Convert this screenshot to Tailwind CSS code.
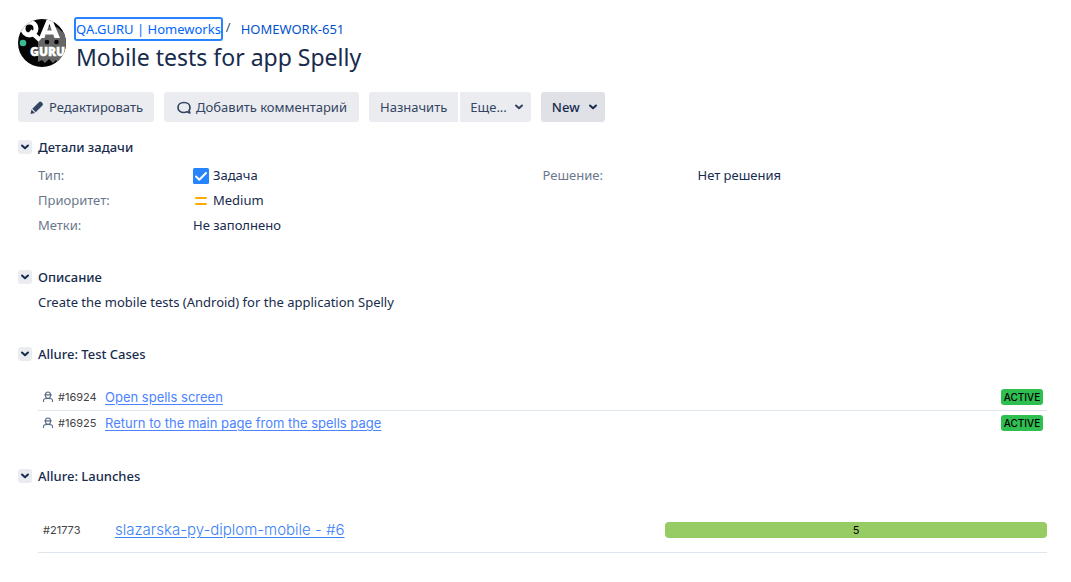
<!DOCTYPE html>
<html lang="ru">
<head>
<meta charset="utf-8">
<meta name="viewport" content="width=device-width, initial-scale=1">
<title>HOMEWORK-651 Mobile tests for app Spelly</title>
<script src="https://cdn.jsdelivr.net/npm/@tailwindcss/browser@4"></script>
</head>
<body class="bg-white font-['Noto_Sans',sans-serif] text-[13px] leading-5 text-[#172b4d]">
<svg class="hidden">
  <symbol id="chevron" viewBox="0 0 10 8"><path d="M2 2.500 5 5.300 8 2.500" fill="none" stroke="currentColor" stroke-width="2" stroke-linecap="round" stroke-linejoin="round"/></symbol>
  <symbol id="person" viewBox="0 0 12 12"><path d="M3.500 3.500a2.500 2.500 0 0 1 5 0v1.200a2.500 2.500 0 0 1-5 0zM2.300 3.900h7.400M1.500 11V9.500Q1.500 7.500 4 7.500h4q2.500 0 2.500 2V11M4.200 6.500v1.800M7.800 6.500v1.800" fill="none" stroke="currentColor" stroke-width="1.100"/></symbol>
</svg>

<header class="flex gap-[10px] px-[18px] pt-[19px]">
  <svg class="size-12 shrink-0" viewBox="0 0 48 48" role="img" aria-label="QA.GURU">
    <clipPath id="disc"><circle cx="24" cy="24" r="24"/></clipPath>
    <g clip-path="url(#disc)">
      <path d="M0 0h48v48H0z" fill="#050505"/>
      <path d="M20 20 28 16V9q6-4 12 0l8 7v30l-7-1-3-4-3 3-4-4-4 4-3-3-4 2z" fill="#666"/>
      <circle cx="5" cy="24" r="3.300" fill="#3cba92"/>
      <circle cx="29" cy="23" r="2.300" fill="#050505"/><circle cx="38.500" cy="23" r="2.300" fill="#050505"/>
      <circle cx="11.500" cy="9.500" r="6.500" fill="none" stroke="#fff" stroke-width="5"/>
      <path d="m12 12 10 9" stroke="#fff" stroke-width="4.500"/>
      <path d="M21 19 28.500 1h6L42 19h-5.500l-1.200-3.500h-7.600L26.500 19zM29.200 11.500h4.600L31.500 5z" fill="#fff" fill-rule="evenodd"/>
      <text x="12" y="37" font-size="12" fill="#fff" stroke="#fff" stroke-width=".4" font-family="Open Sans, sans-serif" font-weight="800">GURU</text>
    </g>
  </svg>
  <div class="-mt-[2px]">
    <nav class="flex items-center" aria-label="Навигация">
      <a href="#" class="-ml-[2px] rounded-[3px] border-2 border-[#2684ff] text-[#0065ff]">QA.GURU | Homeworks</a>
      <span class="ml-[3px] -mt-1 text-[#42526e]">/</span>
      <a href="#" class="ml-[10px] text-[#0052cc]">HOMEWORK-651</a>
    </nav>
    <h1 class="mt-[2px] text-[23px] font-[450] leading-7">Mobile tests for app Spelly</h1>
  </div>
</header>

<div class="mt-[21px] flex gap-[10px] px-[18px] text-[#344563]">
  <button class="flex h-[30px] items-center gap-1 rounded-[3px] bg-[#ebecf0] px-[11px]">
    <svg class="size-4" viewBox="0 0 16 16"><path d="m1.500 15 1-4.500 3.500 3.500zM3.300 9.800l6.800-6.800q1.200-1 2.300.1l1 1q1.100 1.100.1 2.300l-6.800 6.800z" fill="currentColor"/></svg>
    <span>Редактировать</span></button>
  <button class="flex h-[30px] items-center gap-1 rounded-[3px] bg-[#ebecf0] px-3">
    <svg class="size-4" viewBox="0 0 16 16"><path d="M11 12.800q-1.300.7-3 .7C4.500 13.500 2 11.300 2 8.500s2.500-5 6-5 6 2.200 6 5q0 1.800-1 3l.8 2.500z" fill="none" stroke="currentColor" stroke-width="1.700" stroke-linejoin="round"/></svg>
    <span>Добавить комментарий</span></button>
  <div class="flex gap-[2px]">
    <button class="h-[30px] rounded-l-[3px] bg-[#ebecf0] px-[11px]">Назначить</button>
    <button class="flex h-[30px] items-center gap-[7px] rounded-r-[3px] bg-[#ebecf0] pl-[10px] pr-[7px]">Еще...<svg class="h-2 w-[10px]"><use href="#chevron"/></svg></button>
  </div>
  <button class="flex h-[30px] items-center gap-2 rounded-[3px] bg-[#dfe1e6] pl-[11px] pr-[7px] font-medium text-[#172b4d]">New<svg class="h-2 w-[10px]"><use href="#chevron"/></svg></button>
</div>

<main class="px-[18px] pt-[15px]">
  <section>
    <div class="flex items-center gap-[6px]">
      <button aria-label="Детали задачи" class="grid size-[14px] place-items-center rounded-[3px] bg-[#ebecf0]"><svg class="h-2 w-[10px]"><use href="#chevron"/></svg></button>
      <h2 class="font-medium">Детали задачи</h2>
    </div>
    <div class="grid grid-cols-2 pl-5 pr-[6px] pt-[6px] leading-[25px]">
      <dl class="grid grid-cols-[155px_1fr]">
        <dt class="text-[#6b778c]">Тип:</dt>
        <dd class="flex items-center gap-1"><svg class="size-4" viewBox="0 0 16 16"><rect width="16" height="16" rx="1.500" fill="#2684ff"/><path d="m3 8.500 3.300 3.200L13 5" fill="none" stroke="#fff" stroke-width="2" stroke-linecap="round" stroke-linejoin="round"/></svg>Задача</dd>
        <dt class="text-[#6b778c]">Приоритет:</dt>
        <dd class="flex items-center gap-1"><svg class="size-4" viewBox="0 0 16 16"><path d="M3 5h10M3 11h10" stroke="#ffab00" stroke-width="2" stroke-linecap="round"/></svg>Medium</dd>
        <dt class="text-[#6b778c]">Метки:</dt>
        <dd>Не заполнено</dd>
      </dl>
      <dl class="grid grid-cols-[155px_1fr] content-start">
        <dt class="text-[#6b778c]">Решение:</dt>
        <dd>Нет решения</dd>
      </dl>
    </div>
  </section>

  <section class="mt-[29px]">
    <div class="flex items-center gap-[6px]">
      <button aria-label="Описание" class="grid size-[14px] place-items-center rounded-[3px] bg-[#ebecf0]"><svg class="h-2 w-[10px]"><use href="#chevron"/></svg></button>
      <h2 class="font-medium">Описание</h2>
    </div>
    <p class="mt-[5px] pl-5">Create the mobile tests (Android) for the application Spelly</p>
  </section>

  <section class="mt-8">
    <div class="flex items-center gap-[6px]">
      <button aria-label="Allure: Test Cases" class="grid size-[14px] place-items-center rounded-[3px] bg-[#ebecf0]"><svg class="h-2 w-[10px]"><use href="#chevron"/></svg></button>
      <h2 class="font-medium">Allure: Test Cases</h2>
    </div>
    <div class="mt-5 pl-5 pr-[6px]">
      <table class="w-full font-[Inter,sans-serif]">
        <tbody>
          <tr class="h-[26px] border-b border-[#dfe5ec]">
            <td class="w-[67px] p-0 pl-1 text-[11px] text-[#444]"><span class="flex items-center gap-1"><svg class="size-3 text-[#5b6b85]"><use href="#person"/></svg>#16924</span></td>
            <td class="p-0"><a href="#" class="text-[13px] text-[#4c84ff] underline underline-offset-2">Open spells screen</a></td>
            <td class="w-[50px] p-0 pr-1"><span class="ml-auto block h-4 w-[42px] rounded-[3px] bg-[#2fbe50] text-center text-[10px] font-medium leading-4 text-black">ACTIVE</span></td>
          </tr>
          <tr class="h-[26px]">
            <td class="p-0 pl-1 text-[11px] text-[#444]"><span class="flex items-center gap-1"><svg class="size-3 text-[#5b6b85]"><use href="#person"/></svg>#16925</span></td>
            <td class="p-0"><a href="#" class="text-[13px] text-[#4c84ff] underline underline-offset-2">Return to the main page from the spells page</a></td>
            <td class="p-0 pr-1"><span class="ml-auto block h-4 w-[42px] rounded-[3px] bg-[#2fbe50] text-center text-[10px] font-medium leading-4 text-black">ACTIVE</span></td>
          </tr>
        </tbody>
      </table>
    </div>
  </section>

  <section class="mt-[30px]">
    <div class="flex items-center gap-[6px]">
      <button aria-label="Allure: Launches" class="grid size-[14px] place-items-center rounded-[3px] bg-[#ebecf0]"><svg class="h-2 w-[10px]"><use href="#chevron"/></svg></button>
      <h2 class="font-medium">Allure: Launches</h2>
    </div>
    <div class="mt-[23px] pl-5 pr-[6px]">
      <table class="w-full font-[Inter,sans-serif]">
        <tbody>
          <tr class="h-[43px] border-b border-[#dfe5ec]">
            <td class="w-[77px] p-0 pl-[5px] text-[11px] text-[#444]">#21773</td>
            <td class="p-0"><a href="#" class="text-[15px] font-light text-[#3b82f6] underline underline-offset-2">slazarska-py-diplom-mobile - #6</a></td>
            <td class="w-[382px] p-0"><div class="h-4 rounded-[4px] bg-[#97cc64] text-center text-[11px] leading-4 text-black">5</div></td>
          </tr>
        </tbody>
      </table>
    </div>
  </section>
</main>
</body>
</html>
